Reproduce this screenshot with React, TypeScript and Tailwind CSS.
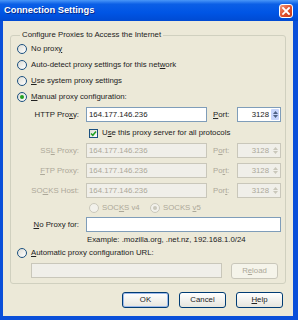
import { ReactNode } from "react";

const font = { fontFamily: '"Liberation Sans", Arial, sans-serif' };

const Radio = ({ checked, disabled }: { checked?: boolean; disabled?: boolean }) => (
  <span
    className={`flex h-[10px] w-[10px] shrink-0 items-center justify-center rounded-full border ${
      disabled ? "border-[#CAC8BB] bg-[#F2F1EB]" : "border-[#1C5180] bg-linear-to-br from-[#DCDCD5] to-white"
    }`}
  >
    {checked && (
      <span className={`h-[4px] w-[4px] rounded-full ${disabled ? "bg-[#CAC8BB]" : "bg-[#21A121]"}`} />
    )}
  </span>
);

const RadioRow = ({ children, checked }: { children: ReactNode; checked?: boolean }) => (
  <div className="flex h-[16px] items-center">
    <Radio checked={checked} />
    <span className="ml-[4px]">{children}</span>
  </div>
);

const Spinner = ({ disabled }: { disabled?: boolean }) => (
  <div
    className={`flex h-[15px] w-[44px] items-center border ${
      disabled ? "border-[#C9C7BA] bg-[#F0EFE9] text-[#ACA899]" : "border-[#7F9DB9] bg-white text-[#222]"
    }`}
  >
    <span className="flex-1 pr-[2px] text-right">3128</span>
    <span
      className={`mr-[1px] flex h-[11px] w-[8px] flex-col items-center justify-center gap-[1px] rounded-[1px] ${
        disabled ? "" : "bg-[#C6D5FB]"
      }`}
    >
      <svg width="5" height="3" viewBox="0 0 5 3">
        <path d="M0 3 L2.5 0 L5 3 Z" fill={disabled ? "#C9C7BA" : "#4D6185"} />
      </svg>
      <svg width="5" height="3" viewBox="0 0 5 3">
        <path d="M0 0 L2.5 3 L5 0 Z" fill={disabled ? "#C9C7BA" : "#4D6185"} />
      </svg>
    </span>
  </div>
);

const ProxyRow = ({
  label,
  port,
  disabled,
}: {
  label: ReactNode;
  port: ReactNode;
  disabled?: boolean;
}) => (
  <div className={`flex h-[15px] items-center ${disabled ? "text-[#ACA899]" : ""}`}>
    <span className="w-[62px] text-right">{label}</span>
    <div
      className={`ml-[7px] flex h-full w-[121px] items-center border px-[2px] ${
        disabled ? "border-[#C9C7BA] bg-[#F0EFE9]" : "border-[#7F9DB9] bg-white"
      }`}
    >
      164.177.146.236
    </div>
    <span className="ml-[6px] w-[24px]">{port}</span>
    <Spinner disabled={disabled} />
  </div>
);

const Button = ({ children, isDefault, disabled }: { children: ReactNode; isDefault?: boolean; disabled?: boolean }) => (
  <button
    className={`flex h-[16px] w-[47px] items-center justify-center rounded-[3px] border ${
      disabled
        ? "border-[#C9C7BA] bg-[#F5F4EA] text-[#ACA899]"
        : "border-[#003C74] bg-linear-to-b from-white to-[#E6E5DE] text-[#222]"
    } ${isDefault ? "shadow-[inset_0_0_0_1px_#9DB9EB]" : ""}`}
  >
    {children}
  </button>
);

const U = ({ children }: { children: ReactNode }) => <u className="underline">{children}</u>;

export default function App() {
  return (
    <div className="flex h-[320px] w-[298px] flex-col bg-[#0A4FD9]" style={font}>
      <div className="flex h-[21px] shrink-0 items-center justify-between bg-[linear-gradient(180deg,#4A97F8_0%,#0B5FE6_20%,#0055E5_60%,#004AD2_100%)] pl-[4px] pr-[5px]">
        <span className="text-[9.3px] font-bold text-white [text-shadow:1px_1px_0_#0A2A8A]">
          Connection Settings
        </span>
        <span className="flex h-[14px] w-[14px] items-center justify-center rounded-[3px] border border-white bg-[linear-gradient(135deg,#F09A7E_0%,#E0512E_50%,#C33A1A_100%)]">
          <svg width="8" height="8" viewBox="0 0 8 8">
            <path d="M1 1 L7 7 M7 1 L1 7" stroke="white" strokeWidth="1.8" strokeLinecap="square" />
          </svg>
        </span>
      </div>

      <div className="mb-[4px] ml-[3px] mr-[5px] flex flex-1 flex-col bg-[#ECE9D8] px-[7px] pt-[9px] text-[7.8px] leading-[10px] text-[#222]">
        <fieldset className="rounded-[3px] border border-[#D0D0BF] pb-[5px] pl-[6px] pr-[4px]">
          <legend className="ml-[3px] px-[2px] leading-[10px]">Configure Proxies to Access the Internet</legend>
          <div className="mt-[1px] flex flex-col">
            <RadioRow>
              No prox<U>y</U>
            </RadioRow>
            <RadioRow>
              Auto-detect proxy settings for this net<U>w</U>ork
            </RadioRow>
            <RadioRow>
              <U>U</U>se system proxy settings
            </RadioRow>
            <RadioRow checked>
              <U>M</U>anual proxy configuration:
            </RadioRow>

            <div className="mt-[2px]">
              <ProxyRow
                label={
                  <>
                    HTTP Pro<U>x</U>y:
                  </>
                }
                port={
                  <>
                    <U>P</U>ort:
                  </>
                }
              />
            </div>

            <div className="mt-[4px] flex h-[14px] items-center pl-[72px]">
              <span className="flex h-[9px] w-[9px] items-center justify-center border border-[#1C5180] bg-linear-to-br from-[#DCDCD5] to-white">
                <svg width="7" height="7" viewBox="0 0 7 7">
                  <path d="M1 3.5 L2.8 5.3 L6 1.5" stroke="#21A121" strokeWidth="1.5" fill="none" />
                </svg>
              </span>
              <span className="ml-[4px]">
                U<U>s</U>e this proxy server for all protocols
              </span>
            </div>

            <div className="mt-[3px]">
              <ProxyRow
                disabled
                label={
                  <>
                    SS<U>L</U> Proxy:
                  </>
                }
                port={
                  <>
                    P<U>o</U>rt:
                  </>
                }
              />
            </div>
            <div className="mt-[5px]">
              <ProxyRow
                disabled
                label={
                  <>
                    <U>F</U>TP Proxy:
                  </>
                }
                port={
                  <>
                    Po<U>r</U>t:
                  </>
                }
              />
            </div>
            <div className="mt-[5px]">
              <ProxyRow
                disabled
                label={
                  <>
                    SO<U>C</U>KS Host:
                  </>
                }
                port={
                  <>
                    Por<U>t</U>:
                  </>
                }
              />
            </div>

            <div className="mt-[3px] flex h-[14px] items-center pl-[72px] text-[#ACA899]">
              <Radio disabled />
              <span className="ml-[3px] w-[48px]">
                SOC<U>K</U>S v4
              </span>
              <Radio disabled checked />
              <span className="ml-[3px]">
                SOCKS <U>v</U>5
              </span>
            </div>

            <div className="mt-[2px] flex h-[15px] items-center">
              <span className="w-[62px] text-right">
                <U>N</U>o Proxy for:
              </span>
              <div className="ml-[7px] h-full w-[195px] border border-[#7F9DB9] bg-white" />
            </div>

            <div className="mt-[1px] flex h-[13px] items-center pl-[70px]">
              Example: .mozilla.org, .net.nz, 192.168.1.0/24
            </div>

            <div className="flex h-[14px] items-center">
              <Radio />
              <span className="ml-[4px]">
                <U>A</U>utomatic proxy configuration URL:
              </span>
            </div>

            <div className="mt-[3px] flex h-[15px] items-center pl-[14px]">
              <div className="h-full w-[191px] border border-[#C9C7BA] bg-[#F0EFE9]" />
              <div className="ml-[9px]">
                <Button disabled>
                  R<U>e</U>load
                </Button>
              </div>
            </div>
          </div>
        </fieldset>

        <div className="mt-[8px] flex justify-end gap-[10px] pr-[3px]">
          <Button isDefault>OK</Button>
          <Button>Cancel</Button>
          <Button>
            <U>H</U>elp
          </Button>
        </div>
      </div>
    </div>
  );
}
